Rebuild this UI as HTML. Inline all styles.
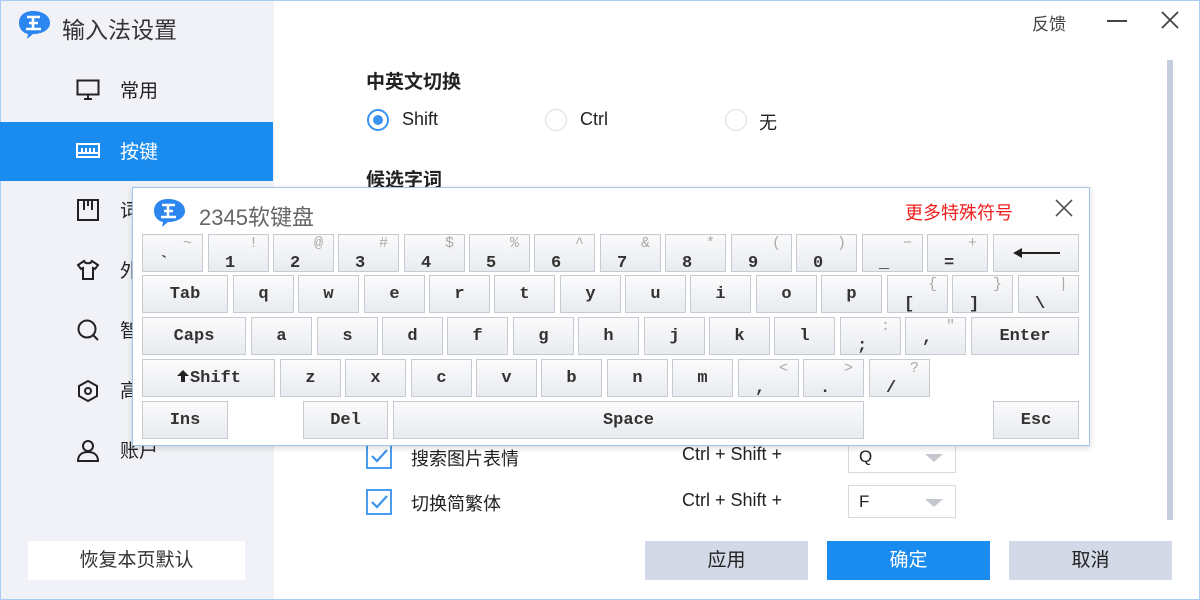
<!DOCTYPE html>
<html><head><meta charset="utf-8"><style>
*{margin:0;padding:0;box-sizing:border-box}
body{width:1200px;height:600px;position:relative;overflow:hidden;background:#fff;font-family:"Liberation Sans","Noto Sans CJK SC",sans-serif;color:#222}
.frame{position:absolute;left:0;top:0;width:1200px;height:600px;border:1px solid #a9cdf2}
.side{position:absolute;left:1px;top:1px;width:273px;height:598px;background:#f1f2f7}
.a{position:absolute;white-space:nowrap}
.nav{position:absolute;left:0;width:273px;height:59px;font-size:19px;line-height:61px}
.nav span{position:absolute;left:120px}
.nav svg{position:absolute;left:76px;top:18px}
.btn{position:absolute;top:541px;width:163px;height:39px;font-size:19px;text-align:center;line-height:39px;background:#d3d9e6;color:#222}
.kb{position:absolute;left:132px;top:187px;width:958px;height:259px;background:#fff;border:1px solid #9ec4ec;box-shadow:0 2px 6px rgba(0,0,0,.15)}
.k{position:absolute;height:38px;border:1px solid #c6cbd2;background:linear-gradient(#fbfbfc,#e8ebef);font-family:"Liberation Mono",monospace;font-weight:bold;font-size:17px;color:#333}
.c{position:absolute;left:0;right:0;top:1px;line-height:36px;text-align:center}
.lo{position:absolute;left:16px;bottom:-2px;font-size:17px}
.hi{position:absolute;right:10px;top:0;font-size:15px;font-weight:normal;color:#aaa}
.sel{position:absolute;left:848px;width:108px;height:33px;border:1px solid #d5d9e0;font-size:17px;line-height:31px;padding-left:10px}
.sel:after{content:"";position:absolute;right:12px;top:13px;border-left:9px solid transparent;border-right:9px solid transparent;border-top:8px solid #c4c8ce}
.cb{position:absolute;left:366px;width:26px;height:26px;border:2px solid #4a9cf0}
</style></head><body>
<div class="side"></div>
<div class="frame"></div>
<svg class="a" style="left:18px;top:10px" width="34" height="30" viewBox="0 0 34 30"><path d="M15 1C6 1 1 6 1 13c0 6 4 10 9 11l-1 5 6-5c9 0 17-4 17-11S25 1 15 1z" fill="#2b86f0"/><path d="M9 7h13M11 13h9M8 19h15M15 7v12" stroke="#fff" stroke-width="2.6" fill="none"/></svg>
<div class="a" style="left:62px;top:11px;font-size:23px;color:#333">输入法设置</div>
<div class="nav" style="top:61px"><svg width="24" height="22" viewBox="0 0 24 22"><rect x="1.5" y="1.5" width="21" height="14" fill="none" stroke="#222" stroke-width="2"/><path d="M8 20h8M12 16v4" stroke="#222" stroke-width="2"/></svg><span>常用</span></div>
<div class="nav" style="top:122px;background:#1a8cf0;color:#fff"><svg width="24" height="22" viewBox="0 0 24 22"><rect x="1" y="4" width="22" height="13" fill="none" stroke="#fff" stroke-width="2"/><path d="M6 8v5M10 8v5M14 8v5M18 8v5M2 13h20" stroke="#fff" stroke-width="2"/></svg><span>按键</span></div>
<div class="nav" style="top:181px"><svg width="24" height="22" viewBox="0 0 24 22"><rect x="2" y="1" width="20" height="20" fill="none" stroke="#222" stroke-width="2"/><path d="M8 1v10M16 1v10M12 1v6" stroke="#222" stroke-width="2"/></svg><span>词</span></div>
<div class="nav" style="top:241px"><svg width="24" height="22" viewBox="0 0 24 22"><path d="M8 2L2 6l3 4 2-1v11h10V9l2 1 3-4-6-4c-1 3-7 3-8 0z" fill="none" stroke="#222" stroke-width="2"/></svg><span>外</span></div>
<div class="nav" style="top:301px"><svg width="24" height="24" viewBox="0 0 24 24"><circle cx="11" cy="10" r="8.5" fill="none" stroke="#222" stroke-width="2"/><path d="M17 16l5 5" stroke="#222" stroke-width="2"/></svg><span>智</span></div>
<div class="nav" style="top:361px"><svg width="24" height="24" viewBox="0 0 24 24"><path d="M12 2l9 5v10l-9 5-9-5V7z" fill="none" stroke="#222" stroke-width="2"/><circle cx="12" cy="12" r="3" fill="none" stroke="#222" stroke-width="2"/></svg><span>高</span></div>
<div class="nav" style="top:421px"><svg width="24" height="24" viewBox="0 0 24 24"><circle cx="12" cy="7" r="5" fill="none" stroke="#222" stroke-width="2"/><path d="M2 22c0-6 4-9 10-9s10 3 10 9z" fill="none" stroke="#222" stroke-width="2"/></svg><span>账户</span></div>
<div class="a" style="left:28px;top:541px;width:217px;height:39px;background:#fff;font-size:19px;text-align:center;line-height:39px;color:#333">恢复本页默认</div>

<div class="a" style="left:1032px;top:10px;font-size:17px;color:#444">反馈</div>
<div class="a" style="left:1107px;top:20px;width:20px;height:2px;background:#444"></div>
<svg class="a" style="left:1161px;top:11px" width="18" height="18"><path d="M1 1l16 16M17 1L1 17" stroke="#444" stroke-width="1.8"/></svg>
<div class="a" style="left:1167px;top:60px;width:6px;height:460px;background:#c5cde0"></div>

<div class="a" style="left:366px;top:67px;font-size:19px;font-weight:bold">中英文切换</div>
<div class="a" style="left:367px;top:109px;width:22px;height:22px;border:2px solid #3b93f0;border-radius:50%"><div style="position:absolute;left:4px;top:4px;width:10px;height:10px;background:#3b93f0;border-radius:50%"></div></div>
<div class="a" style="left:402px;top:109px;font-size:18px">Shift</div>
<div class="a" style="left:545px;top:109px;width:22px;height:22px;border:1.5px solid #d6dbe5;border-radius:50%"></div>
<div class="a" style="left:580px;top:109px;font-size:18px">Ctrl</div>
<div class="a" style="left:725px;top:109px;width:22px;height:22px;border:1.5px solid #d6dbe5;border-radius:50%"></div>
<div class="a" style="left:759px;top:109px;font-size:18px">无</div>
<div class="a" style="left:366px;top:165px;font-size:19px;font-weight:bold">候选字词</div>

<div class="cb" style="top:443px"><svg width="22" height="22" style="position:absolute;left:0;top:0"><path d="M4 11l5 5 10-11" stroke="#3b93f0" stroke-width="2.2" fill="none"/></svg></div>
<div class="a" style="left:411px;top:445px;font-size:18px">搜索图片表情</div>
<div class="a" style="left:682px;top:444px;font-size:18px">Ctrl + Shift +</div>
<div class="sel" style="top:440px">Q</div>
<div class="cb" style="top:489px"><svg width="22" height="22" style="position:absolute;left:0;top:0"><path d="M4 11l5 5 10-11" stroke="#3b93f0" stroke-width="2.2" fill="none"/></svg></div>
<div class="a" style="left:411px;top:490px;font-size:18px">切换简繁体</div>
<div class="a" style="left:682px;top:490px;font-size:18px">Ctrl + Shift +</div>
<div class="sel" style="top:485px">F</div>

<div class="btn" style="left:645px">应用</div>
<div class="btn" style="left:827px;background:#1a8cf0;color:#fff">确定</div>
<div class="btn" style="left:1009px">取消</div>

<div class="kb">
<svg class="a" style="left:20px;top:10px" width="34" height="30" viewBox="0 0 34 30"><path d="M15 1C6 1 1 6 1 13c0 6 4 10 9 11l-1 5 6-5c9 0 17-4 17-11S25 1 15 1z" fill="#2b86f0"/><path d="M9 7h13M11 13h9M8 19h15M15 7v12" stroke="#fff" stroke-width="2.6" fill="none"/></svg>
<div class="a" style="left:66px;top:12px;font-size:22px;color:#666">2345软键盘</div>
<div class="a" style="left:772px;top:11px;font-size:18px;color:#f01d1d">更多特殊符号</div>
<svg class="a" style="left:921px;top:10px" width="20" height="20"><path d="M2 2l16 16M18 2L2 18" stroke="#555" stroke-width="1.6"/></svg>
</div>
<div id="keys">
<div class="k" style="left:142px;top:234px;width:61px"><span class="lo">`</span><span class="hi">~</span></div>
<div class="k" style="left:208px;top:234px;width:61px"><span class="lo">1</span><span class="hi">!</span></div>
<div class="k" style="left:273px;top:234px;width:61px"><span class="lo">2</span><span class="hi">@</span></div>
<div class="k" style="left:338px;top:234px;width:61px"><span class="lo">3</span><span class="hi">#</span></div>
<div class="k" style="left:404px;top:234px;width:61px"><span class="lo">4</span><span class="hi">$</span></div>
<div class="k" style="left:469px;top:234px;width:61px"><span class="lo">5</span><span class="hi">%</span></div>
<div class="k" style="left:534px;top:234px;width:61px"><span class="lo">6</span><span class="hi">^</span></div>
<div class="k" style="left:600px;top:234px;width:61px"><span class="lo">7</span><span class="hi">&amp;</span></div>
<div class="k" style="left:665px;top:234px;width:61px"><span class="lo">8</span><span class="hi">*</span></div>
<div class="k" style="left:731px;top:234px;width:61px"><span class="lo">9</span><span class="hi">(</span></div>
<div class="k" style="left:796px;top:234px;width:61px"><span class="lo">0</span><span class="hi">)</span></div>
<div class="k" style="left:862px;top:234px;width:61px"><span class="lo">_</span><span class="hi">−</span></div>
<div class="k" style="left:927px;top:234px;width:61px"><span class="lo">=</span><span class="hi">+</span></div>
<div class="k" style="left:993px;top:234px;width:86px"><svg style="position:absolute;left:18px;top:12px" width="50" height="12"><path d="M48 6H8" stroke="#222" stroke-width="2"/><path d="M1 6l9-5v10z" fill="#222"/></svg></div>
<div class="k" style="left:142px;top:275px;width:86px"><span class="c">Tab</span></div>
<div class="k" style="left:233px;top:275px;width:61px"><span class="c">q</span></div>
<div class="k" style="left:298px;top:275px;width:61px"><span class="c">w</span></div>
<div class="k" style="left:364px;top:275px;width:61px"><span class="c">e</span></div>
<div class="k" style="left:429px;top:275px;width:61px"><span class="c">r</span></div>
<div class="k" style="left:494px;top:275px;width:61px"><span class="c">t</span></div>
<div class="k" style="left:560px;top:275px;width:61px"><span class="c">y</span></div>
<div class="k" style="left:625px;top:275px;width:61px"><span class="c">u</span></div>
<div class="k" style="left:690px;top:275px;width:61px"><span class="c">i</span></div>
<div class="k" style="left:756px;top:275px;width:61px"><span class="c">o</span></div>
<div class="k" style="left:821px;top:275px;width:61px"><span class="c">p</span></div>
<div class="k" style="left:887px;top:275px;width:61px"><span class="lo">[</span><span class="hi">{</span></div>
<div class="k" style="left:952px;top:275px;width:61px"><span class="lo">]</span><span class="hi">}</span></div>
<div class="k" style="left:1018px;top:275px;width:61px"><span class="lo">\</span><span class="hi">|</span></div>
<div class="k" style="left:142px;top:317px;width:104px"><span class="c">Caps</span></div>
<div class="k" style="left:251px;top:317px;width:61px"><span class="c">a</span></div>
<div class="k" style="left:317px;top:317px;width:61px"><span class="c">s</span></div>
<div class="k" style="left:382px;top:317px;width:61px"><span class="c">d</span></div>
<div class="k" style="left:447px;top:317px;width:61px"><span class="c">f</span></div>
<div class="k" style="left:513px;top:317px;width:61px"><span class="c">g</span></div>
<div class="k" style="left:578px;top:317px;width:61px"><span class="c">h</span></div>
<div class="k" style="left:644px;top:317px;width:61px"><span class="c">j</span></div>
<div class="k" style="left:709px;top:317px;width:61px"><span class="c">k</span></div>
<div class="k" style="left:774px;top:317px;width:61px"><span class="c">l</span></div>
<div class="k" style="left:840px;top:317px;width:61px"><span class="lo">;</span><span class="hi">:</span></div>
<div class="k" style="left:905px;top:317px;width:61px"><span class="lo" style="bottom:6px">,</span><span class="hi">″</span></div>
<div class="k" style="left:971px;top:317px;width:108px"><span class="c">Enter</span></div>
<div class="k" style="left:142px;top:359px;width:133px"><span class="c"><svg width="14" height="14" viewBox="0 0 14 14" style="vertical-align:-1px"><path d="M7 1l6 6H9v6H5V7H1z" fill="#222"/></svg>Shift</span></div>
<div class="k" style="left:280px;top:359px;width:61px"><span class="c">z</span></div>
<div class="k" style="left:345px;top:359px;width:61px"><span class="c">x</span></div>
<div class="k" style="left:411px;top:359px;width:61px"><span class="c">c</span></div>
<div class="k" style="left:476px;top:359px;width:61px"><span class="c">v</span></div>
<div class="k" style="left:541px;top:359px;width:61px"><span class="c">b</span></div>
<div class="k" style="left:607px;top:359px;width:61px"><span class="c">n</span></div>
<div class="k" style="left:672px;top:359px;width:61px"><span class="c">m</span></div>
<div class="k" style="left:738px;top:359px;width:61px"><span class="lo">,</span><span class="hi">&lt;</span></div>
<div class="k" style="left:803px;top:359px;width:61px"><span class="lo">.</span><span class="hi">&gt;</span></div>
<div class="k" style="left:869px;top:359px;width:61px"><span class="lo">/</span><span class="hi">?</span></div>
<div class="k" style="left:142px;top:401px;width:86px"><span class="c">Ins</span></div>
<div class="k" style="left:303px;top:401px;width:85px"><span class="c">Del</span></div>
<div class="k" style="left:393px;top:401px;width:471px"><span class="c">Space</span></div>
<div class="k" style="left:993px;top:401px;width:86px"><span class="c">Esc</span></div>
</div>
</body></html>
